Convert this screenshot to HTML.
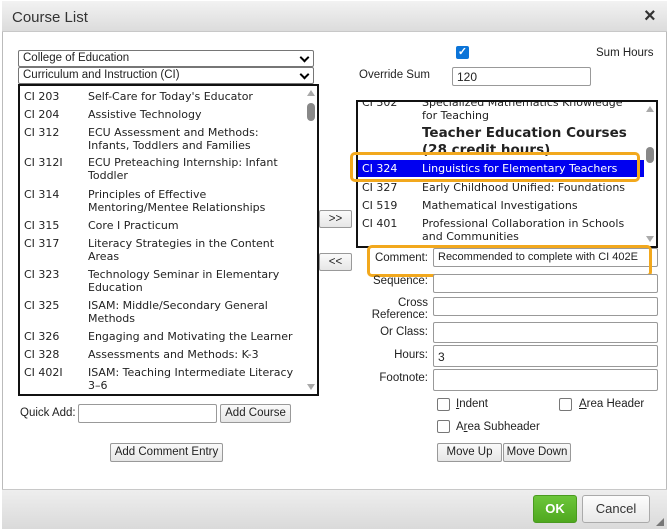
<!DOCTYPE html>
<html><head><style>
*{box-sizing:border-box;margin:0;padding:0}
body{width:669px;height:532px;background:#fff;font-family:"Liberation Sans",Arial,sans-serif;font-size:11.5px;color:#222;position:relative;overflow:hidden}
.a{position:absolute}
.dlg{left:2px;top:1px;width:665px;height:528px;border:1px solid #bbb;background:#fff}
.title{left:2px;top:1px;width:665px;height:31px;background:linear-gradient(#f2f2f2,#dcdcdc);border-bottom:1px solid #c8c8c8}
.foot{left:2px;top:489px;width:665px;height:40px;background:linear-gradient(#eee,#dadada);border-top:1px solid #c8c8c8}
.sel{height:17px;border:1px solid #767676;border-radius:2px;background:#fff;font-size:11.5px;padding:1px 4px;line-height:13px}
.sel:after{content:"";position:absolute;right:5px;top:3px;width:5px;height:5px;border-right:2px solid #000;border-bottom:2px solid #000;transform:rotate(45deg)}
.list{border:2px solid #111;background:#fff;overflow:hidden;font-family:"DejaVu Sans",Verdana,sans-serif;font-size:11px;line-height:13px}
.r{position:absolute;left:4px;width:280px;white-space:nowrap}
.r .c{position:absolute;left:0;top:0;white-space:nowrap}
.r .t{position:absolute;left:64px;top:0;white-space:nowrap}
.rl .r .t{left:60px}
.inp{border:1px solid #999;border-radius:2px;background:#fff;height:19px;padding:2px 4px;font-size:12px}
.btn{border:1px solid #999;border-radius:2px;background:linear-gradient(#fafafa,#e6e6e6);font-size:11.5px;text-align:center;line-height:16px}
.lbl{text-align:right;font-size:11.5px;width:90px;line-height:12px}
.cb{width:13px;height:13px;border:1px solid #777;border-radius:2px;background:#fff}
</style></head><body>
<div class="a dlg"></div>
<div class="a title"></div>
<div class="a" style="left:12px;top:9px;font-size:15px;color:#333">Course List</div>
<div class="a" style="left:644px;top:5px;font-size:20px;font-weight:bold;color:#333">×</div>

<div class="a sel" style="left:18px;top:50px;width:296px">College of Education</div>
<div class="a sel" style="left:18px;top:67px;width:296px">Curriculum and Instruction (CI)</div>

<div class="a list" style="left:18px;top:84px;width:301px;height:312px">
<div class="r" style="top:4px"><span class="c">CI 203</span><span class="t">Self-Care for Today's Educator</span></div>
<div class="r" style="top:22px"><span class="c">CI 204</span><span class="t">Assistive Technology</span></div>
<div class="r" style="top:40px"><span class="c">CI 312</span><span class="t">ECU Assessment and Methods:<br>Infants, Toddlers and Families</span></div>
<div class="r" style="top:70px"><span class="c">CI 312I</span><span class="t">ECU Preteaching Internship: Infant<br>Toddler</span></div>
<div class="r" style="top:102px"><span class="c">CI 314</span><span class="t">Principles of Effective<br>Mentoring/Mentee Relationships</span></div>
<div class="r" style="top:133px"><span class="c">CI 315</span><span class="t">Core I Practicum</span></div>
<div class="r" style="top:151px"><span class="c">CI 317</span><span class="t">Literacy Strategies in the Content<br>Areas</span></div>
<div class="r" style="top:182px"><span class="c">CI 323</span><span class="t">Technology Seminar in Elementary<br>Education</span></div>
<div class="r" style="top:213px"><span class="c">CI 325</span><span class="t">ISAM: Middle/Secondary General<br>Methods</span></div>
<div class="r" style="top:244px"><span class="c">CI 326</span><span class="t">Engaging and Motivating the Learner</span></div>
<div class="r" style="top:262px"><span class="c">CI 328</span><span class="t">Assessments and Methods: K-3</span></div>
<div class="r" style="top:280px"><span class="c">CI 402I</span><span class="t">ISAM: Teaching Intermediate Literacy<br>3–6</span></div>
<div class="a" style="left:287px;top:4px;width:0;height:0;border-left:4px solid transparent;border-right:4px solid transparent;border-bottom:6px solid #aaa"></div>
<div class="a" style="left:287px;top:17px;width:8px;height:18px;border-radius:4px;background:#888"></div>
<div class="a" style="left:287px;top:298px;width:0;height:0;border-left:4px solid transparent;border-right:4px solid transparent;border-top:6px solid #aaa"></div>
</div>

<div class="a btn" style="left:319px;top:210px;width:33px;height:18px">&gt;&gt;</div>
<div class="a btn" style="left:319px;top:253px;width:33px;height:18px">&lt;&lt;</div>

<div class="a" style="left:456px;top:46px;width:13px;height:13px;background:#0b74d8;border-radius:2px;color:#fff;font-size:11px;line-height:13px;text-align:center;font-weight:bold">✓</div>
<div class="a" style="left:596px;top:47px">Sum Hours</div>
<div class="a" style="left:359px;top:69px">Override Sum</div>
<div class="a inp" style="left:452px;top:67px;width:139px">120</div>

<div class="a list rl" style="left:356px;top:100px;width:302px;height:148px">
<div class="r" style="top:-6px"><span class="c">CI 302</span><span class="t">Specialized Mathematics Knowledge<br>for Teaching</span></div>
<div class="a" style="left:64px;top:23px;font-weight:bold;font-size:13.5px;line-height:17px;white-space:nowrap">Teacher Education Courses<br>(28 credit hours)</div>
<div class="a" style="left:0;top:58px;width:286px;height:17px;background:#0000f0;color:#fff;white-space:nowrap"><span class="a" style="left:4px;top:2px">CI 324</span><span class="a" style="left:64px;top:2px">Linguistics for Elementary Teachers</span></div>
<div class="r" style="top:79px"><span class="c">CI 327</span><span class="t">Early Childhood Unified: Foundations</span></div>
<div class="r" style="top:97px"><span class="c">CI 519</span><span class="t">Mathematical Investigations</span></div>
<div class="r" style="top:115px"><span class="c">CI 401</span><span class="t">Professional Collaboration in Schools<br>and Communities</span></div>
<div class="a" style="left:288px;top:4px;width:0;height:0;border-left:4px solid transparent;border-right:4px solid transparent;border-bottom:6px solid #aaa"></div>
<div class="a" style="left:288px;top:45px;width:8px;height:16px;border-radius:4px;background:#888"></div>
<div class="a" style="left:288px;top:134px;width:0;height:0;border-left:4px solid transparent;border-right:4px solid transparent;border-top:6px solid #aaa"></div>
</div>
<div class="a" style="left:350px;top:152px;width:290px;height:30px;border:3px solid #f2a81d;border-radius:5px"></div>

<div class="a lbl" style="left:338px;top:252px">Comment:</div>
<div class="a inp" style="left:433px;top:248px;width:225px;font-size:11px">Recommended to complete with CI 402E</div>
<div class="a" style="left:367px;top:245px;width:285px;height:32px;border:3px solid #f2a81d;border-radius:5px"></div>

<div class="a lbl" style="left:338px;top:275px">Sequence:</div>
<div class="a inp" style="left:433px;top:274px;width:225px"></div>
<div class="a lbl" style="left:338px;top:297px">Cross<br>Reference:</div>
<div class="a inp" style="left:433px;top:297px;width:225px"></div>
<div class="a lbl" style="left:338px;top:326px">Or Class:</div>
<div class="a inp" style="left:433px;top:322px;width:225px;height:21px"></div>
<div class="a lbl" style="left:338px;top:349px">Hours:</div>
<div class="a inp" style="left:433px;top:345px;width:225px;height:22px;padding-top:4px">3</div>
<div class="a lbl" style="left:338px;top:372px">Footnote:</div>
<div class="a inp" style="left:433px;top:369px;width:225px;height:22px"></div>

<div class="a cb" style="left:437px;top:398px"></div>
<div class="a" style="left:456px;top:398px"><u>I</u>ndent</div>
<div class="a cb" style="left:559px;top:398px"></div>
<div class="a" style="left:579px;top:398px"><u>A</u>rea Header</div>
<div class="a cb" style="left:437px;top:420px"></div>
<div class="a" style="left:456px;top:421px">A<u>r</u>ea Subheader</div>

<div class="a btn" style="left:437px;top:443px;width:65px;height:19px">Move Up</div>
<div class="a btn" style="left:503px;top:443px;width:68px;height:19px">Move Down</div>

<div class="a" style="left:20px;top:407px">Quick Add:</div>
<div class="a inp" style="left:78px;top:404px;width:139px"></div>
<div class="a btn" style="left:220px;top:404px;width:71px;height:19px">Add Course</div>
<div class="a btn" style="left:110px;top:443px;width:113px;height:19px">Add Comment Entry</div>

<div class="a foot"></div>
<div class="a" style="left:533px;top:495px;width:44px;height:28px;background:linear-gradient(#6cc63a,#4fa81f);border:1px solid #4a9a20;border-radius:3px;color:#fff;font-weight:bold;font-size:13px;text-align:center;line-height:26px">OK</div>
<div class="a" style="left:582px;top:495px;width:68px;height:28px;background:linear-gradient(#fdfdfd,#e8e8e8);border:1px solid #aaa;border-radius:3px;color:#333;font-size:13px;text-align:center;line-height:26px">Cancel</div>
<div class="a" style="left:656px;top:518px;width:0;height:0;border-left:8px solid transparent;border-bottom:8px solid #777"></div>
</body></html>
